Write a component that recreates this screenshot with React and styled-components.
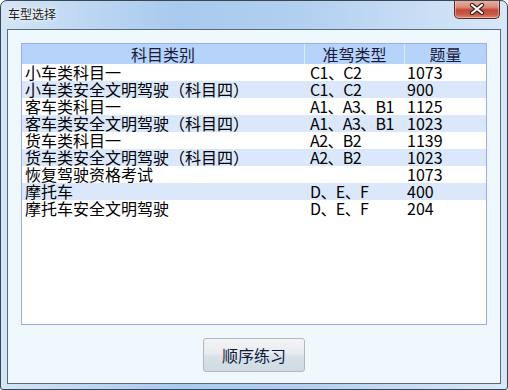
import React from 'react';
import styled, { createGlobalStyle } from 'styled-components';

const GlobalStyle = createGlobalStyle`
  html, body {
    margin: 0;
    padding: 0;
    background: #ffffff;
  }
  body {
    font-family: "Noto Sans CJK SC", "Noto Sans", sans-serif;
  }
`;

const Frame = styled.div`
  width: 508px;
  height: 390px;
  box-sizing: border-box;
  border: 1px solid #3a4654;
  border-radius: 7px 7px 3px 3px;
  background: linear-gradient(90deg, #d4e5f6 0%, #bcd6f2 18%, #a8caee 35%, #b2d0f0 60%, #c6dcf4 80%, #d8e8f8 100%);
  display: flex;
  flex-direction: column;
  padding: 0 6px 5px 6px;
  overflow: hidden;
`;

const TitleBar = styled.div`
  height: 28px;
  display: flex;
  justify-content: space-between;
  align-items: flex-start;
  padding-left: 1px;
  margin-right: 1px;
`;

const Title = styled.span`
  margin-top: 5px;
  font-size: 12px;
  line-height: 16px;
  color: #1a1a1a;
  text-shadow: 0 0 6px rgba(255, 255, 255, 0.95), 0 0 3px rgba(255, 255, 255, 0.9);
`;

const CloseButton = styled.div`
  width: 46px;
  height: 19px;
  margin-top: -1px;
  box-sizing: border-box;
  border: 1px solid #5a2a26;
  border-top: none;
  border-radius: 0 0 5px 5px;
  background: linear-gradient(180deg, #eab3a6 0%, #d98a7c 40%, #c24a3a 55%, #c85a48 80%, #e08a74 100%);
  box-shadow: inset 0 0 0 1px rgba(255, 220, 210, 0.45);
  display: flex;
  align-items: center;
  justify-content: center;
`;

const Client = styled.div`
  flex: 1;
  box-sizing: border-box;
  border: 1px solid #5c6b7c;
  background: #eef8fd;
  padding: 13px 13px 11px 13px;
  display: flex;
  flex-direction: column;
  align-items: center;
`;

const List = styled.div`
  align-self: stretch;
  height: 282px;
  box-sizing: border-box;
  border: 1px solid #a3a6ff;
  background: #ffffff;
  display: grid;
  grid-template-columns: 283px 100px 1fr;
  grid-auto-rows: 17px;
  grid-template-rows: 20px;
  align-content: start;
  font-size: 16px;
  color: #000000;
`;

const HeadCell = styled.div`
  background: #b6d3fa;
  text-align: center;
  line-height: 20px;
  color: #1a1a3a;
  border-right: ${p => (p.last ? 'none' : '1px solid #d8f0e4')};
  box-sizing: border-box;
`;

const Cell = styled.div`
  background: ${p => (p.alt ? '#dbe8fc' : '#ffffff')};
  line-height: 17px;
  padding-left: ${p => p.pad}px;
  white-space: nowrap;
  letter-spacing: ${p => p.spacing || 0}px;
`;

const Button = styled.button`
  margin-top: 13px;
  width: 102px;
  height: 34px;
  box-sizing: border-box;
  border: 1px solid #b4b8bc;
  border-radius: 3px;
  background: linear-gradient(180deg, #f3f4f5 0%, #e8ecef 45%, #d6e1e9 55%, #cfdbe4 100%);
  font-family: "Noto Sans CJK SC", sans-serif;
  font-size: 16px;
  color: #0e1a3c;
  padding: 0;
`;

const rows = [
  ['小车类科目一', 'C1、C2', '1073'],
  ['小车类安全文明驾驶（科目四）', 'C1、C2', '900'],
  ['客车类科目一', 'A1、A3、B1', '1125'],
  ['客车类安全文明驾驶（科目四）', 'A1、A3、B1', '1023'],
  ['货车类科目一', 'A2、B2', '1139'],
  ['货车类安全文明驾驶（科目四）', 'A2、B2', '1023'],
  ['恢复驾驶资格考试', '', '1073'],
  ['摩托车', 'D、E、F', '400'],
  ['摩托车安全文明驾驶', 'D、E、F', '204'],
];

const CloseIcon = () => (
  <svg width="16" height="12" viewBox="0 0 16 12">
    <path d="M3 2 L13 10 M13 2 L3 10" stroke="#3a1a18" strokeWidth="4.2" strokeLinecap="round" />
    <path d="M3 2 L13 10 M13 2 L3 10" stroke="#ffffff" strokeWidth="2.2" strokeLinecap="round" />
  </svg>
);

export default function App() {
  return (
    <>
      <GlobalStyle />
      <Frame>
        <TitleBar>
          <Title>车型选择</Title>
          <CloseButton><CloseIcon /></CloseButton>
        </TitleBar>
        <Client>
          <List>
            <HeadCell>科目类别</HeadCell>
            <HeadCell>准驾类型</HeadCell>
            <HeadCell last>题量</HeadCell>
            {rows.map((r, i) => (
              <React.Fragment key={i}>
                <Cell alt={i % 2 === 1} pad={3}>{r[0]}</Cell>
                <Cell alt={i % 2 === 1} pad={5} spacing={-0.6}>{r[1]}</Cell>
                <Cell alt={i % 2 === 1} pad={2}>{r[2]}</Cell>
              </React.Fragment>
            ))}
          </List>
          <Button>顺序练习</Button>
        </Client>
      </Frame>
    </>
  );
}
